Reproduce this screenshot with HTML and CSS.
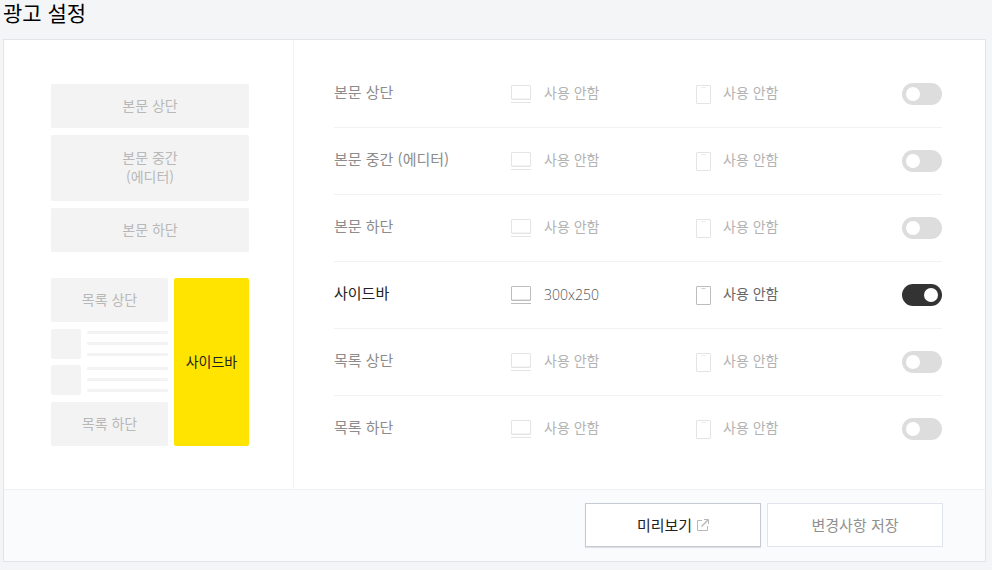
FILE: index.html
```html
<!DOCTYPE html>
<html lang="ko">

<head>
    <meta charset="UTF-8">
    <meta name="viewport" content="width=device-width, initial-scale=1.0">
    <title>광고 설정</title>
    <link rel="stylesheet" href="styles.css">
</head>

<body>

    <!-- 아이콘 -->
    <svg class="sprite" aria-hidden="true">
        <symbol id="icon-pc" viewBox="0 0 20 18">
            <path d="M1 13.5h18" fill="none" stroke="#e6e6e6"/>
            <rect x=".5" y=".5" width="19" height="14" rx=".5" fill="none" stroke="#bdbdbd"/>
            <path d="M0 17.5h20" fill="none" stroke="#bdbdbd"/>
        </symbol>
        <symbol id="icon-mobile" viewBox="0 0 15 19">
            <rect x=".5" y=".5" width="14" height="18" rx=".5" fill="none" stroke="#bdbdbd"/>
            <path d="M5.5 2.5h4" fill="none" stroke="#cfcfcf"/>
        </symbol>
    </svg>

    <h2 class="title">광고 설정</h2>

    <form class="card">
        <div class="content">
            <div class="preview">
                <div class="slot">본문 상단</div>
                <div class="slot slot-tall">본문 중간<br>(에디터)</div>
                <div class="slot">본문 하단</div>

                <div class="preview-bottom">
                    <div class="list">
                        <div class="slot">목록 상단</div>
                        <div class="posts">
                            <div class="post">
                                <div class="thumb"></div>
                                <div class="lines"><i></i><i></i><i></i></div>
                            </div>
                            <div class="post">
                                <div class="thumb"></div>
                                <div class="lines"><i></i><i></i><i></i></div>
                            </div>
                        </div>
                        <div class="slot">목록 하단</div>
                    </div>
                    <div class="slot slot-side">사이드바</div>
                </div>
            </div>

            <div class="settings">
                <div class="row">
                    <label class="name" for="bodyTop">본문 상단</label>
                    <div class="device pc"><svg width="20" height="18"><use href="#icon-pc"/></svg><span>사용 안함</span></div>
                    <div class="device mobile"><svg width="15" height="19"><use href="#icon-mobile"/></svg><span>사용 안함</span></div>
                    <input class="toggle" type="checkbox" id="bodyTop">
                </div>
                <div class="row">
                    <label class="name" for="bodyMiddle">본문 중간 (에디터)</label>
                    <div class="device pc"><svg width="20" height="18"><use href="#icon-pc"/></svg><span>사용 안함</span></div>
                    <div class="device mobile"><svg width="15" height="19"><use href="#icon-mobile"/></svg><span>사용 안함</span></div>
                    <input class="toggle" type="checkbox" id="bodyMiddle">
                </div>
                <div class="row">
                    <label class="name" for="bodyBottom">본문 하단</label>
                    <div class="device pc"><svg width="20" height="18"><use href="#icon-pc"/></svg><span>사용 안함</span></div>
                    <div class="device mobile"><svg width="15" height="19"><use href="#icon-mobile"/></svg><span>사용 안함</span></div>
                    <input class="toggle" type="checkbox" id="bodyBottom">
                </div>
                <div class="row on">
                    <label class="name" for="sidebar">사이드바</label>
                    <div class="device pc"><svg width="20" height="18"><use href="#icon-pc"/></svg><span class="size">300x250</span></div>
                    <div class="device mobile"><svg width="15" height="19"><use href="#icon-mobile"/></svg><span>사용 안함</span></div>
                    <input class="toggle" type="checkbox" id="sidebar" checked>
                </div>
                <div class="row">
                    <label class="name" for="listTop">목록 상단</label>
                    <div class="device pc"><svg width="20" height="18"><use href="#icon-pc"/></svg><span>사용 안함</span></div>
                    <div class="device mobile"><svg width="15" height="19"><use href="#icon-mobile"/></svg><span>사용 안함</span></div>
                    <input class="toggle" type="checkbox" id="listTop">
                </div>
                <div class="row">
                    <label class="name" for="listBottom">목록 하단</label>
                    <div class="device pc"><svg width="20" height="18"><use href="#icon-pc"/></svg><span>사용 안함</span></div>
                    <div class="device mobile"><svg width="15" height="19"><use href="#icon-mobile"/></svg><span>사용 안함</span></div>
                    <input class="toggle" type="checkbox" id="listBottom">
                </div>
            </div>
        </div>

        <div class="buttons">
            <button type="button" class="btn btn-preview">
                <span>미리보기</span>
                <svg width="12" height="12" viewBox="0 0 12 12" fill="none" stroke="#b8b8b8" aria-hidden="true">
                    <path d="M5 1.5H.5v10h10V7"/>
                    <path d="M7 .5h4.500V5"/>
                    <path d="M11 1L4.500 7.500" stroke-width="1.500"/>
                </svg>
            </button>
            <button type="submit" class="btn"><span>변경사항 저장</span></button>
        </div>
    </form>

</body>

</html>
```
FILE: styles.css
```css
* {
    box-sizing: border-box;
}

body {
    margin: 0;
    padding: 0 6px 8px 3px;
    background-color: #f3f5f7;
    color: #333;
    font-family: "Noto Sans CJK KR", sans-serif;
    font-size: 14px;
    line-height: 19px;
}

.sprite {
    display: none;
}

.title {
    margin: 0 0 15px;
    color: #000;
    font-size: 21px;
    font-weight: 400;
    line-height: 24px;
}

.card {
    border: 1px solid #e1e4e8;
    background-color: #fff;
}

.content {
    display: flex;
}

/* 미리보기 영역 */
.preview {
    display: flex;
    flex-direction: column;
    flex: none;
    gap: 7px;
    width: 290px;
    padding: 44px 44px 43px 47px;
    border-right: 1px solid #f1f2f4;
}

.slot {
    display: flex;
    align-items: center;
    justify-content: center;
    height: 44px;
    padding-bottom: 2px;
    border-radius: 2px;
    background-color: #f3f3f3;
    color: #b8b8b8;
    text-align: center;
}

.slot-tall {
    height: 66px;
}

.preview-bottom {
    display: flex;
    gap: 6px;
    margin-top: 19px;
}

.list {
    display: flex;
    flex: 1;
    flex-direction: column;
    gap: 7px;
}

.slot-side {
    width: 75px;
    height: auto;
    background-color: #ffe400;
    color: #222;
}

.posts {
    display: flex;
    flex-direction: column;
    gap: 6px;
}

.post {
    display: flex;
    gap: 6px;
}

.thumb {
    width: 30px;
    height: 30px;
    border-radius: 2px;
    background-color: #f3f3f3;
}

.lines {
    display: flex;
    flex: 1;
    flex-direction: column;
    gap: 8px;
    padding-top: 2px;
}

.lines i {
    height: 3px;
    border-radius: 1px;
    background-color: #f3f3f3;
}

/* 설정 목록 */
.settings {
    flex: 1;
    padding: 21px 43px 0 40px;
}

.row {
    display: flex;
    align-items: center;
    height: 67px;
    border-bottom: 1px solid #f1f2f4;
}

.row:last-child {
    border-bottom-color: transparent;
}

.name {
    flex: 1;
    padding-bottom: 5px;
    color: #8c8c8c;
    font-size: 15px;
}

.device {
    display: flex;
    align-items: center;
    color: #b3b3b3;
}

.device svg {
    opacity: 0.4;
}

.device span {
    padding-bottom: 4px;
}

.pc {
    gap: 13px;
    width: 185px;
}

.mobile {
    gap: 12px;
    width: 206px;
}

.device .size {
    padding-bottom: 2px;
    color: #555;
    font-family: "Open Sans", sans-serif;
    font-weight: 300;
}

.on .name {
    color: #222;
}

.on .device {
    color: #666;
}

.on .device svg {
    opacity: 1;
}

.toggle {
    display: flex;
    appearance: none;
    width: 40px;
    height: 22px;
    margin: 0;
    padding: 4px;
    border-radius: 11px;
    background-color: #ddd;
    cursor: pointer;
}

.toggle::before {
    content: "";
    width: 14px;
    height: 14px;
    border-radius: 50%;
    background-color: #fff;
}

.toggle:checked {
    justify-content: flex-end;
    background-color: #333;
}

/* 하단 버튼 */
.buttons {
    display: flex;
    justify-content: flex-end;
    gap: 6px;
    padding: 13px 42px 14px;
    border-top: 1px solid #f0f1f4;
    background-color: #fafbfd;
}

.btn {
    display: flex;
    align-items: center;
    justify-content: center;
    gap: 5px;
    width: 176px;
    height: 44px;
    padding: 0;
    border: 1px solid #e0e4ec;
    background-color: #fff;
    color: #909090;
    font-family: inherit;
    font-size: 15px;
    cursor: pointer;
}

.btn span {
    padding-bottom: 2px;
}

.btn-preview {
    border-color: #c5cbd5;
    box-shadow: 0 1px 1px rgba(0, 0, 0, 0.1);
    color: #222;
}
```
